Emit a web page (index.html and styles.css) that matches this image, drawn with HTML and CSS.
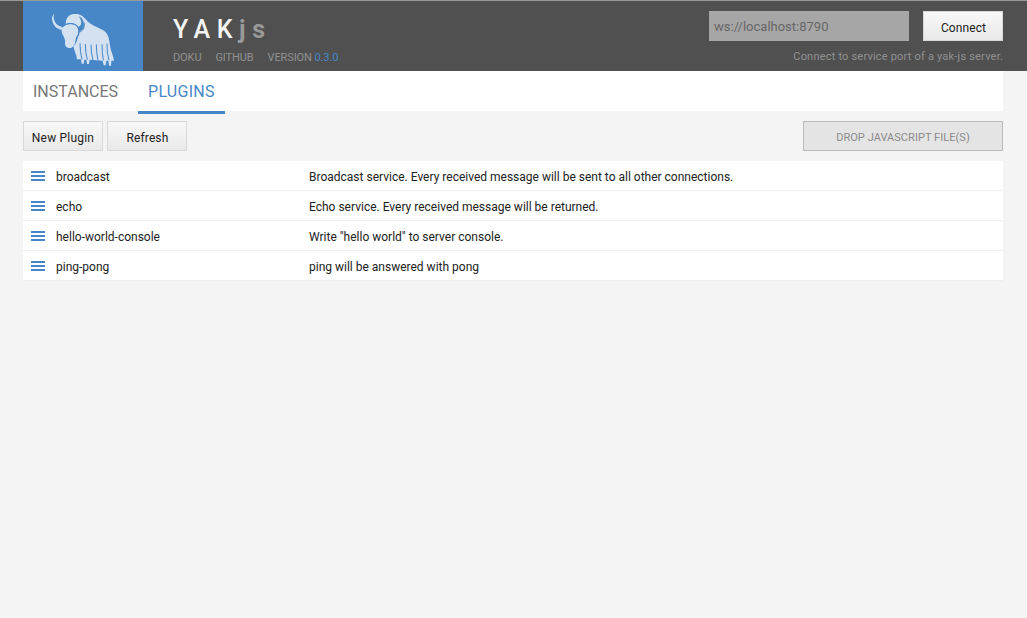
FILE: index.html
```
<!DOCTYPE html>
<html lang="en">
<head>
<meta charset="utf-8">
<title>YAKjs</title>
<link rel="stylesheet" href="styles.css">
</head>
<body>
<header class="header">
  <div class="container header-inner">
    <svg class="logo" viewBox="9 3 360 210" aria-label="yak">
      <g class="yak">
        <path d="M104 41C97 44 95 53 97 62C100 77 111 87 126 89L128 81C116 79 107 73 104 63C101 55 101 49 104 41Z"/>
        <path d="M138 63C141 49 150 42 165 42C181 41 190 49 199 60C213 77 236 82 252 92C265 101 268 118 270 137C272 154 281 166 282 182H274L273 197H267L265 182H259L257 196H251L248 182L209 179L207 192H201L199 179H193L191 191H185L183 178H171C170 163 162 153 160 139C170 130 171 121 174 111C178 105 179 99 178 95C187 92 192 84 192 75C192 63 187 55 180 49C187 65 188 76 177 82L171 76C161 68 147 68 137 72Z"/>
        <path d="M127 83C134 73 147 70 158 73C169 75 175 83 175 94C175 105 169 108 167 118C166 130 162 141 152 144C143 146 134 139 135 129C137 120 133 114 129 106C125 98 123 90 127 83Z"/>
      </g>
      <path class="horn-line" d="M104 41C101 50 102 58 107 65C112 73 119 76 128 78M178 50C187 62 188 75 177 81"/>
      <path class="horn-line" d="M126 82C134 72 150 68 163 73C174 77 178 86 176 97C189 94 195 83 192 67"/>
      <path class="hair" d="M180 130Q180 156 186 178M196 132Q196 158 202 179M213 134Q213 160 219 181M229 133Q229 160 234 181M246 133Q246 158 250 181M261 131Q260 158 267 181"/>
    </svg>
    <div class="brand">
      <h1 class="title">YAK<span class="title-js">js</span></h1>
      <nav class="links"><a class="doku">DOKU</a><a class="github">GITHUB</a><span class="version">VERSION <b class="number">0.3.0</b></span></nav>
    </div>
    <div class="connection">
      <div class="connect-form">
        <input class="address" type="text" placeholder="ws://localhost:8790">
        <button class="button connect">Connect</button>
      </div>
      <div class="hint">Connect to service port of a yak-js server.</div>
    </div>
  </div>
</header>
<main class="container">
  <nav class="tabs">
    <a class="tab instances">INSTANCES</a>
    <a class="tab active">PLUGINS</a>
  </nav>
  <div class="toolbar">
    <button class="button new">New Plugin</button>
    <button class="button refresh">Refresh</button>
    <div class="drop">DROP JAVASCRIPT FILE(S)</div>
  </div>
  <ul class="list">
    <li class="row"><span class="menu"></span><span class="name">broadcast</span><span class="desc">Broadcast service. Every received message will be sent to all other connections.</span></li>
    <li class="row"><span class="menu"></span><span class="name">echo</span><span class="desc">Echo service. Every received message will be returned.</span></li>
    <li class="row"><span class="menu"></span><span class="name">hello-world-console</span><span class="desc">Write "hello world" to server console.</span></li>
    <li class="row"><span class="menu"></span><span class="name">ping-pong</span><span class="desc">ping will be answered with pong</span></li>
  </ul>
</main>
</body>
</html>
```
FILE: styles.css
```
* { box-sizing: border-box; }
body { margin: 0; background: #f4f4f4; color: #222; font: 12px/14px Roboto, sans-serif; }
.container { width: 980px; margin-left: 23px; }
.header { height: 71px; background: #505050; border-top: 1px solid #999; }
.header-inner { display: flex; }
.logo { display: block; width: 120px; height: 70px; background: #4787c7; }
.yak { fill: #d3e1f1; }
.hair, .horn-line { fill: none; stroke: #4787c7; stroke-width: 3; }
.brand { padding: 14px 0 0 30px; }
.title { margin: 0; font-size: 25px; line-height: 30px; font-weight: 500; letter-spacing: 6.6px; color: #f4f4f4; }
.title-js { color: #999; font-weight: 700; }
.links { display: flex; gap: 14px; margin-top: 6px; font-size: 11px; line-height: 14px; color: #909090; letter-spacing: -.1px; }
.number { color: #4787c7; font-weight: 400; }
.connection { margin-left: auto; padding-top: 10px; }
.connect-form { display: flex; gap: 14px; }
.address { width: 200px; height: 30px; padding: 1px 5px; border: 0; border-radius: 0; background: #a6a6a6; font: 13px Roboto, sans-serif; }
.address::placeholder { color: #666; opacity: 1; }
.hint { margin-top: 9px; font-size: 11px; line-height: 14px; text-align: right; color: #909090; letter-spacing: .2px; }
.button { width: 80px; height: 30px; padding: 3px 0 0; border: 1px solid #d8d8d8; border-radius: 0; background: linear-gradient(#f8f8f8, #e9e9e9); color: #222; font: 12px/14px Roboto, sans-serif; letter-spacing: .2px; }
.connect, .refresh { padding-left: 1px; letter-spacing: .1px; }
.tabs { display: flex; gap: 10px; height: 40px; background: #fff; }
.tab { height: 43px; padding: 11px 10px 9px; font-size: 16px; line-height: 20px; color: #777; }
.active { color: #4787c7; border-bottom: 3px solid #4787c7; letter-spacing: .25px; }
.toolbar { display: flex; gap: 4px; padding: 10px 0; }
.drop { width: 200px; height: 30px; margin-left: auto; padding-top: 9px; border: 1px solid #bbb; background: #e4e4e4; color: #8b8b8b; font-size: 11px; text-align: center; letter-spacing: .05px; }
.list { margin: 0; padding: 0; list-style: none; }
.row { display: flex; align-items: center; height: 30px; padding: 2px 8px 0; border-bottom: 1px solid #eee; background: #fff; }
.menu { width: 14px; height: 10px; margin: -2px 11px 0 0; border-top: 2px solid #4787c7; border-bottom: 2px solid #4787c7; background: linear-gradient(#4787c7, #4787c7) center / 100% 2px no-repeat; }
.name { width: 253px; }
```
